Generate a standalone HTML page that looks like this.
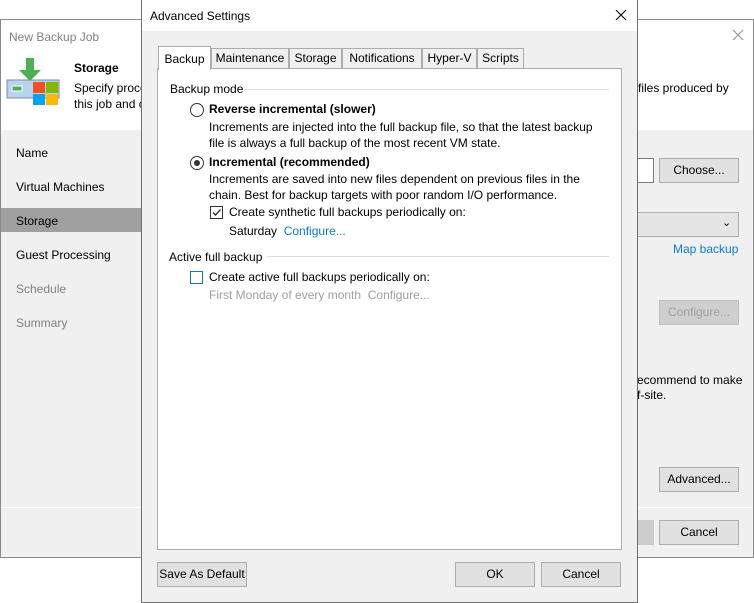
<!DOCTYPE html>
<html><head><style>
*{margin:0;padding:0;box-sizing:border-box}
body{width:754px;height:603px;background:#fff;position:relative;overflow:hidden;font-family:"Liberation Sans",sans-serif;font-size:12px;color:#000}
.a{position:absolute}
.btn{position:absolute;background:#e1e1e1;border:1px solid #adadad;text-align:center;line-height:23px;font-size:12px}
.t{white-space:nowrap}
</style></head><body>
<!-- back window -->
<div class="a" style="left:0;top:19px;width:754px;height:539px;border:1px solid #8a8a8a;background:#f0f0f0"></div>
<div class="a" style="left:1px;top:20px;width:752px;height:110px;background:#fff"></div>
<div class="a t" style="left:9px;top:30px;color:#808080;font-size:12px">New Backup Job</div>
<svg class="a" style="left:732px;top:29px" width="12" height="12"><path d="M1 1L11 11M11 1L1 11" stroke="#999" stroke-width="1.2"/></svg>
<svg class="a" style="left:6px;top:56px" width="54" height="54" viewBox="0 0 54 54">
<rect x="1" y="24" width="52" height="18" fill="#b7d3ef" stroke="#888"/>
<rect x="6" y="30" width="10" height="5" fill="#4caf50" stroke="#fff"/>
<path d="M20 2h8v12h7l-11 11l-11-11h7z" fill="#4caf50"/>
<rect x="27" y="26" width="12" height="11" fill="#f25022"/>
<rect x="40" y="26" width="12" height="11" fill="#7fba00"/>
<rect x="27" y="38" width="12" height="11" fill="#00a4ef"/>
<rect x="40" y="38" width="12" height="11" fill="#ffb900"/>
</svg>
<div class="a t" style="left:74px;top:61px;font-weight:bold">Storage</div>
<div class="a t" style="left:74px;top:81px">Specify proce</div>
<div class="a t" style="left:74px;top:97px">this job and c</div>
<div class="a t" style="left:638px;top:81px">files produced by</div>
<div class="a" style="left:1px;top:208px;width:140px;height:24px;background:#a0a0a0"></div>
<div class="a t" style="left:16px;top:146px">Name</div>
<div class="a t" style="left:16px;top:180px">Virtual Machines</div>
<div class="a t" style="left:16px;top:214px">Storage</div>
<div class="a t" style="left:16px;top:248px">Guest Processing</div>
<div class="a t" style="left:16px;top:282px;color:#808080">Schedule</div>
<div class="a t" style="left:16px;top:316px;color:#808080">Summary</div>
<div class="a" style="left:1px;top:507px;width:752px;height:1px;background:#fff"></div>
<div class="a" style="left:620px;top:158px;width:34px;height:25px;background:#fff;border:1px solid #7a7a7a"></div>
<div class="btn" style="left:659px;top:158px;width:80px;height:25px">Choose...</div>
<div class="a" style="left:620px;top:212px;width:119px;height:25px;background:#e5e5e5;border:1px solid #adadad"></div>
<div class="a" style="left:722px;top:216px;font-size:11px">⌄</div>
<div class="a t" style="left:673px;top:242px;color:#0a7ad6">Map backup</div>
<div class="btn" style="left:659px;top:300px;width:80px;height:25px;color:#a0a0a0;background:#cfcfcf;border-color:#bfbfbf">Configure...</div>
<div class="a t" style="left:637px;top:373px">ecommend to make</div>
<div class="a t" style="left:637px;top:388px">f-site.</div>
<div class="btn" style="left:659px;top:467px;width:80px;height:25px">Advanced...</div>
<div class="a" style="left:620px;top:520px;width:34px;height:25px;background:#ccc"></div>
<div class="btn" style="left:659px;top:520px;width:80px;height:25px">Cancel</div>

<!-- front dialog -->
<div class="a" style="left:141px;top:0;width:497px;height:603px;border:1px solid #6e6e6e;background:#f0f0f0"></div>
<div class="a" style="left:142px;top:0;width:495px;height:31px;background:#fff"></div>
<div class="a t" style="left:150px;top:9px">Advanced Settings</div>
<svg class="a" style="left:615px;top:9px" width="12" height="12"><path d="M1 1L11 11M11 1L1 11" stroke="#111" stroke-width="1.2"/></svg>
<div class="a" style="left:157px;top:68px;width:465px;height:482px;background:#fff;border:1px solid #adadad"></div>
<!-- tabs -->
<div class="a t" style="left:211px;top:48px;width:78px;height:21px;background:#f0f0f0;border:1px solid #adadad;text-align:center;line-height:19px">Maintenance</div>
<div class="a t" style="left:289px;top:48px;width:53px;height:21px;background:#f0f0f0;border:1px solid #adadad;text-align:center;line-height:19px">Storage</div>
<div class="a t" style="left:342px;top:48px;width:80px;height:21px;background:#f0f0f0;border:1px solid #adadad;text-align:center;line-height:19px">Notifications</div>
<div class="a t" style="left:422px;top:48px;width:55px;height:21px;background:#f0f0f0;border:1px solid #adadad;text-align:center;line-height:19px">Hyper-V</div>
<div class="a t" style="left:477px;top:48px;width:47px;height:21px;background:#f0f0f0;border:1px solid #adadad;text-align:center;line-height:19px">Scripts</div>
<div class="a t" style="left:158px;top:46px;width:53px;height:24px;background:#fff;border:1px solid #adadad;border-bottom:none;text-align:center;line-height:24px">Backup</div>
<div class="a t" style="left:170px;top:82px">Backup mode</div>
<div class="a" style="left:245px;top:89px;width:364px;height:1px;background:#dcdcdc"></div>
<div class="a" style="left:190px;top:103px;width:14px;height:14px;border:1px solid #333;border-radius:50%;background:#fff"></div>
<div class="a t" style="left:209px;top:102px;font-weight:bold">Reverse incremental (slower)</div>
<div class="a t" style="left:209px;top:120px">Increments are injected into the full backup file, so that the latest backup</div>
<div class="a t" style="left:209px;top:136px">file is always a full backup of the most recent VM state.</div>
<div class="a" style="left:190px;top:156px;width:14px;height:14px;border:1px solid #333;border-radius:50%;background:#fff"></div>
<div class="a" style="left:194px;top:160px;width:6px;height:6px;border-radius:50%;background:#333"></div>
<div class="a t" style="left:209px;top:155px;font-weight:bold">Incremental (recommended)</div>
<div class="a t" style="left:209px;top:172px">Increments are saved into new files dependent on previous files in the</div>
<div class="a t" style="left:209px;top:188px">chain. Best for backup targets with poor random I/O performance.</div>
<div class="a" style="left:210px;top:206px;width:13px;height:13px;border:1px solid #333;background:#fff"></div>
<svg class="a" style="left:210px;top:206px" width="13" height="13"><path d="M3 6.5l2.5 2.5l5-5.5" stroke="#222" stroke-width="1.3" fill="none"/></svg>
<div class="a t" style="left:229px;top:205px">Create synthetic full backups periodically on:</div>
<div class="a t" style="left:229px;top:224px">Saturday <span style="color:#0a7ad6">&nbsp;Configure...</span></div>
<div class="a t" style="left:169px;top:250px">Active full backup</div>
<div class="a" style="left:267px;top:256px;width:342px;height:1px;background:#dcdcdc"></div>
<div class="a" style="left:190px;top:271px;width:13px;height:13px;border:1px solid #1f6fb5;background:#fff"></div>
<div class="a t" style="left:209px;top:270px">Create active full backups periodically on:</div>
<div class="a t" style="left:209px;top:288px;color:#a0a0a0">First Monday of every month &nbsp;Configure...</div>
<div class="btn" style="left:157px;top:562px;width:90px;height:25px">Save As Default</div>
<div class="btn" style="left:455px;top:562px;width:80px;height:25px">OK</div>
<div class="btn" style="left:541px;top:562px;width:80px;height:25px">Cancel</div>
</body></html>
